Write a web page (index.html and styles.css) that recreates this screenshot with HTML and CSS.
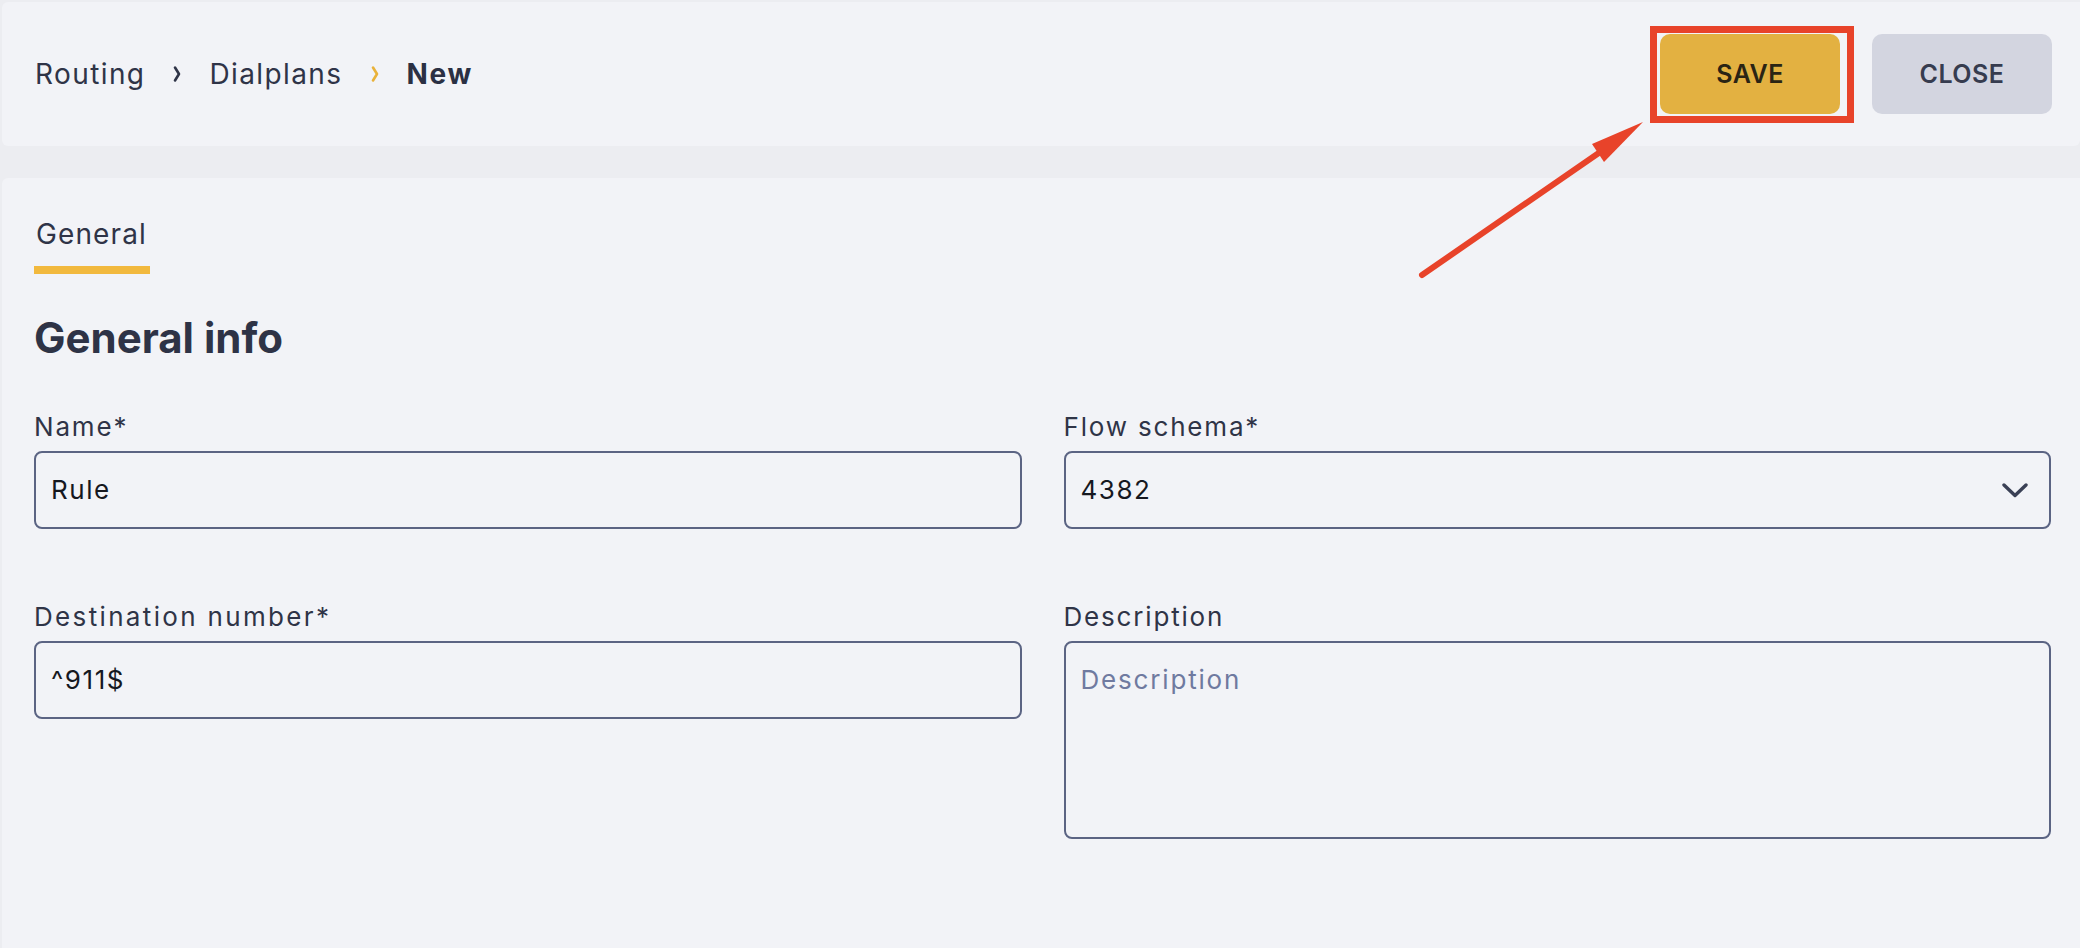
FILE: index.html
```html
<!DOCTYPE html>
<html lang="en">
<head>
<meta charset="utf-8">
<title>Dialplans – New</title>
<link rel="stylesheet" href="styles.css">
</head>
<body>
  <header class="topbar">
    <nav class="crumbs">
      <span class="crumb">Routing</span>
      <svg class="crumb-sep" viewBox="0 0 8 18" width="8" height="18"><path d="M2 2.5 L6 9 L2 15.5" fill="none" stroke="currentColor" stroke-width="2.6" stroke-linecap="round" stroke-linejoin="round"/></svg>
      <span class="crumb">Dialplans</span>
      <svg class="crumb-sep crumb-sep-active" viewBox="0 0 8 18" width="8" height="18"><path d="M2 2.5 L6 9 L2 15.5" fill="none" stroke="currentColor" stroke-width="2.6" stroke-linecap="round" stroke-linejoin="round"/></svg>
      <span class="crumb crumb-current">New</span>
    </nav>
    <div class="actions">
      <button class="btn btn-save" type="button">SAVE</button>
      <button class="btn btn-close" type="button">CLOSE</button>
    </div>
  </header>

  <main class="panel">
    <div class="tabs">
      <span class="tab tab-active">General</span>
    </div>

    <h1 class="section-title">General info</h1>

    <form class="form-grid">
      <div class="field">
        <label class="field-label">Name*</label>
        <div class="control"><span class="value">Rule</span></div>
      </div>
      <div class="field">
        <label class="field-label">Flow schema*</label>
        <div class="control control-select">
          <span class="value">4382</span>
          <svg class="select-caret" viewBox="0 0 26 15" width="26" height="15"><path d="M2 2 L13 12.5 L24 2" fill="none" stroke="currentColor" stroke-width="3.4" stroke-linecap="round" stroke-linejoin="round"/></svg>
        </div>
      </div>
      <div class="field">
        <label class="field-label field-label-wide">Destination number*</label>
        <div class="control"><span class="value">^911$</span></div>
      </div>
      <div class="field">
        <label class="field-label">Description</label>
        <div class="control control-area"><span class="placeholder">Description</span></div>
      </div>
    </form>
  </main>

  <svg class="callout" width="2080" height="948" viewBox="0 0 2080 948">
    <rect x="1653.5" y="29.5" width="197" height="90" fill="none" stroke="#e8432a" stroke-width="7"/>
    <line x1="1422" y1="275" x2="1606" y2="148" stroke="#e8432a" stroke-width="6" stroke-linecap="round"/>
    <polygon points="1643,122 1592,144 1604,162" fill="#e8432a"/>
  </svg>
</body>
</html>
```

FILE: styles.css
```css
* {
  box-sizing: border-box;
}

html, body {
  margin: 0;
  padding: 0;
}

body {
  position: relative;
  width: 2080px;
  height: 948px;
  overflow: hidden;
  background: #ecedf1;
  font-family: "Inter", "Noto Sans", sans-serif;
  color: #2f3447;
  letter-spacing: 0.03em;
}

/* top bar with breadcrumbs and actions */
.topbar {
  margin: 2px 0 0 2px;
  height: 144px;
  padding: 0 28px 0 33px;
  background: #f2f3f7;
  border-radius: 6px 0 6px 6px;
  display: flex;
  align-items: center;
  justify-content: space-between;
}

.crumbs {
  display: flex;
  align-items: center;
  gap: 28px;
  font-size: 28px;
  line-height: 34px;
  letter-spacing: 0.05em;
}

.crumb {
  color: #2f3447;
}

.crumb-current {
  font-weight: 700;
  color: #2b3043;
  letter-spacing: 0.06em;
}

.crumb-sep {
  color: #2f3447;
  flex: none;
}

.crumb-sep-active {
  color: #e9b23a;
}

.actions {
  display: flex;
  gap: 32px;
}

.btn {
  width: 180px;
  height: 80px;
  border: none;
  border-radius: 10px;
  font-family: inherit;
  font-size: 25px;
  font-weight: 600;
  letter-spacing: 0.02em;
  cursor: pointer;
}

.btn-save {
  background: #e3b141;
  color: #2a2414;
}

.btn-close {
  background: #d3d5e0;
  color: #363c4f;
}

/* main form panel */
.panel {
  margin: 32px 0 0 2px;
  height: 770px;
  padding: 39px 29px 0 32px;
  background: #f2f3f7;
  border-radius: 6px 0 0 0;
}

.tabs {
  display: flex;
}

.tab {
  font-size: 28px;
  line-height: 34px;
  padding: 0 3px 15px 2px;
  color: #2f3447;
  letter-spacing: 0.04em;
}

.tab-active {
  border-bottom: 8px solid #f2b93e;
}

.section-title {
  margin: 39px 0 48px;
  font-size: 42px;
  line-height: 50px;
  font-weight: 700;
  color: #2e3346;
  letter-spacing: 0;
}

.form-grid {
  display: grid;
  grid-template-columns: 1fr 1fr;
  column-gap: 42px;
  row-gap: 72px;
  align-items: start;
}

.field {
  display: flex;
  flex-direction: column;
  gap: 8px;
}

.field-label {
  font-size: 26px;
  line-height: 32px;
  color: #2f3447;
  letter-spacing: 0.07em;
}

.field-label-wide {
  letter-spacing: 0.09em;
}

.control {
  height: 78px;
  border: 2px solid #5b6483;
  border-radius: 8px;
  padding: 0 21px 0 15px;
  display: flex;
  align-items: center;
  justify-content: space-between;
  font-size: 26px;
  line-height: 32px;
}

.control-area {
  height: 198px;
  align-items: flex-start;
  padding-top: 21px;
}

.value {
  color: #16181f;
  letter-spacing: 0.06em;
}

.placeholder {
  color: #6f7aa0;
  letter-spacing: 0.07em;
}

.select-caret {
  color: #3a4055;
  flex: none;
}

/* annotation overlay */
.callout {
  position: absolute;
  left: 0;
  top: 0;
  pointer-events: none;
}
```
